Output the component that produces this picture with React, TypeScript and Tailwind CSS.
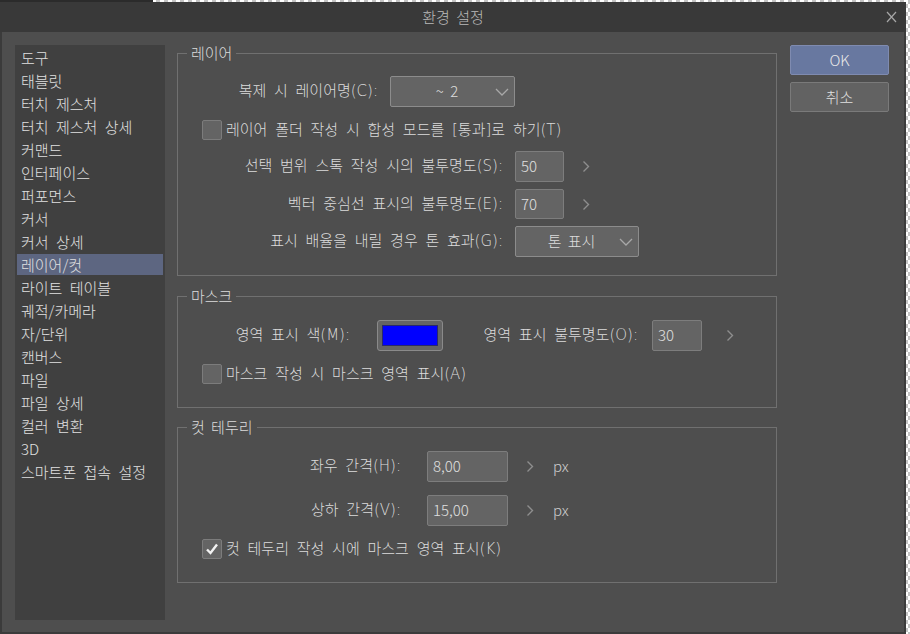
import React from "react";

const listItems = [
  "도구",
  "태블릿",
  "터치 제스처",
  "터치 제스처 상세",
  "커맨드",
  "인터페이스",
  "퍼포먼스",
  "커서",
  "커서 상세",
  "레이어/컷",
  "라이트 테이블",
  "궤적/카메라",
  "자/단위",
  "캔버스",
  "파일",
  "파일 상세",
  "컬러 변환",
  "3D",
  "스마트폰 접속 설정",
];

const LBL = "font-['DejaVu_Sans','Noto_Sans_CJK_KR',sans-serif]";

function Chevron() {
  return (
    <svg width="8" height="13" viewBox="0 0 8 13" className="shrink-0">
      <path d="M1.5 1.5 L6.5 6.5 L1.5 11.5" fill="none" stroke="#8e8e8e" strokeWidth="1.4" />
    </svg>
  );
}

function DownChevron() {
  return (
    <svg width="14" height="8" viewBox="0 0 14 8" className="shrink-0">
      <path d="M1 1 L7 7 L13 1" fill="none" stroke="#a8a8a8" strokeWidth="1.3" />
    </svg>
  );
}

function Select({ value, width }: { value: string; width: string }) {
  return (
    <div
      className={`${width} h-full flex items-center bg-[#646464] border border-[#8c8c8c] rounded-[2px] pr-[5px]`}
    >
      <div className="flex-1 text-center text-[#dcdcdc] pl-[8px]">{value}</div>
      <DownChevron />
    </div>
  );
}

function NumInput({ value, width }: { value: string; width: string }) {
  return (
    <div
      className={`${width} h-full flex items-start pt-[4px] pl-[5px] bg-[#646464] border border-[#7d7d7d] rounded-[2px] text-[#e0e0e0] leading-[20px]`}
    >
      {value}
    </div>
  );
}

function Checkbox({ checked }: { checked?: boolean }) {
  return (
    <div className="w-[20px] h-[20px] shrink-0 bg-[#646464] border border-[#7c7c7c] rounded-[2px] flex items-center justify-center">
      {checked && (
        <svg width="16" height="16" viewBox="0 0 16 16">
          <path d="M3 8.5 L6.5 12 L13 3.5" fill="none" stroke="#f2f2f2" strokeWidth="2.4" />
        </svg>
      )}
    </div>
  );
}

function Legend({ children }: { children: React.ReactNode }) {
  return (
    <legend className="ml-[9px] px-[4px] leading-[16px] text-[#dcdcdc]">{children}</legend>
  );
}

export default function App() {
  return (
    <div className="relative w-[910px] h-[634px] overflow-hidden bg-[repeating-conic-gradient(#c4c4c4_0%_25%,#ffffff_0%_50%)] bg-size-[8px_8px] bg-[length:8px_8px] font-['Noto_Sans_CJK_KR','Noto_Sans',sans-serif] font-light text-[15px] text-[#dcdcdc] [word-spacing:3px]">
      <div className="h-[2px] w-[153px] bg-[#2b2b2b]" />
      <div className="w-[906px] h-[632px] flex flex-col">
        <div className="h-[30px] bg-[#393939] grid grid-cols-[1fr_auto_1fr] items-center">
          <div />
          <div className="text-[#b9b9b9] leading-[20px]">환경 설정</div>
          <div className="flex justify-end pr-[9px]">
            <svg width="11" height="12" viewBox="0 0 11 12">
              <path d="M1 1 L10 11 M10 1 L1 11" stroke="#a6a6a6" strokeWidth="1.2" fill="none" />
            </svg>
          </div>
        </div>
        <div className="flex-1 bg-[#4e4e4e] border-l-2 border-r-2 border-b-2 border-[#3b3b3b] flex pt-[13px] pl-[13px]">
          {/* Left list */}
          <div className="w-[150px] h-[575px] bg-[#404040] pt-[2px] px-[2px] flex flex-col gap-[2px]">
            {listItems.map((item) => (
              <div
                key={item}
                className={`h-[21px] shrink-0 flex items-center pl-[4px] leading-[21px] text-[#e0e0e0] [word-spacing:4px] ${
                  item === "레이어/컷" ? "bg-[#5d6681]" : ""
                }`}
              >
                {item}
              </div>
            ))}
          </div>

          {/* Groups */}
          <div className="ml-[12px] w-[600px] flex flex-col">
            <fieldset className="border border-[#707070] pb-[18px]">
              <Legend>레이어</Legend>
              <div className="flex items-center mt-[15px] h-[31px]">
                <div className={`w-[200px] text-right ${LBL}`}>복제 시 레이어명(C):</div>
                <div className="ml-[12px] h-full">
                  <Select value="~ 2" width="w-[125px]" />
                </div>
              </div>
              <div className="flex items-center mt-[13px] h-[20px] pl-[24px]">
                <Checkbox />
                <span className={`ml-[4px] ${LBL}`}>레이어 폴더 작성 시 합성 모드를 [통과]로 하기(T)</span>
              </div>
              <div className="flex items-center mt-[11px] h-[31px]">
                <div className={`w-[325px] text-right ${LBL}`}>선택 범위 스톡 작성 시의 불투명도(S):</div>
                <div className="ml-[12px] h-full">
                  <NumInput value="50" width="w-[49px]" />
                </div>
                <div className="ml-[18px]">
                  <Chevron />
                </div>
              </div>
              <div className="flex items-center mt-[7px] h-[30px]">
                <div className={`w-[325px] text-right ${LBL}`}>벡터 중심선 표시의 불투명도(E):</div>
                <div className="ml-[12px] h-full">
                  <NumInput value="70" width="w-[49px]" />
                </div>
                <div className="ml-[18px]">
                  <Chevron />
                </div>
              </div>
              <div className="flex items-center mt-[7px] h-[31px]">
                <div className={`w-[325px] text-right ${LBL}`}>표시 배율을 내릴 경우 톤 효과(G):</div>
                <div className="ml-[12px] h-full">
                  <Select value="톤 표시" width="w-[124px]" />
                </div>
              </div>
            </fieldset>

            <fieldset className="mt-[12px] border border-[#707070] pb-[23px]">
              <Legend>마스크</Legend>
              <div className="flex items-center mt-[16px] h-[31px]">
                <div className={`w-[172px] text-right ${LBL}`}>영역 표시 색(M):</div>
                <div className="ml-[27px] w-[66px] h-[31px] bg-[#646464] border border-[#8a8a8a] rounded-[3px] p-[4px]">
                  <div className="w-full h-full bg-[#0000ff] border border-[#2a2a6a]" />
                </div>
                <div className={`w-[195px] text-right ${LBL}`}>영역 표시 불투명도(O):</div>
                <div className="ml-[14px] h-full">
                  <NumInput value="30" width="w-[50px]" />
                </div>
                <div className="ml-[24px]">
                  <Chevron />
                </div>
              </div>
              <div className="flex items-center mt-[13px] h-[20px] pl-[24px]">
                <Checkbox />
                <span className={`ml-[4px] ${LBL}`}>마스크 작성 시 마스크 영역 표시(A)</span>
              </div>
            </fieldset>

            <fieldset className="mt-[11px] border border-[#707070] pb-[23px]">
              <Legend>컷 테두리</Legend>
              <div className="flex items-center mt-[16px] h-[31px]">
                <div className={`w-[223px] text-right ${LBL}`}>좌우 간격(H):</div>
                <div className="ml-[26px] h-full">
                  <NumInput value="8,00" width="w-[81px]" />
                </div>
                <div className="ml-[18px]">
                  <Chevron />
                </div>
                <div className="ml-[19px] text-[#cfcfcf]">px</div>
              </div>
              <div className="flex items-center mt-[13px] h-[31px]">
                <div className={`w-[223px] text-right ${LBL}`}>상하 간격(V):</div>
                <div className="ml-[26px] h-full">
                  <NumInput value="15,00" width="w-[81px]" />
                </div>
                <div className="ml-[18px]">
                  <Chevron />
                </div>
                <div className="ml-[19px] text-[#cfcfcf]">px</div>
              </div>
              <div className="flex items-center mt-[13px] h-[20px] pl-[24px]">
                <Checkbox checked />
                <span className={`ml-[4px] ${LBL}`}>컷 테두리 작성 시에 마스크 영역 표시(K)</span>
              </div>
            </fieldset>
          </div>

          {/* Buttons */}
          <div className="ml-[13px] w-[99px] flex flex-col">
            <div className="h-[30px] bg-[#6878a0] border border-[#7f8bb0] rounded-[2px] flex items-center justify-center text-[#e8e8e8]">
              OK
            </div>
            <div className="mt-[7px] h-[30px] bg-[#626262] border border-[#7a7a7a] rounded-[2px] flex items-center justify-center text-[#e0e0e0]">
              취소
            </div>
          </div>
        </div>
      </div>
    </div>
  );
}
